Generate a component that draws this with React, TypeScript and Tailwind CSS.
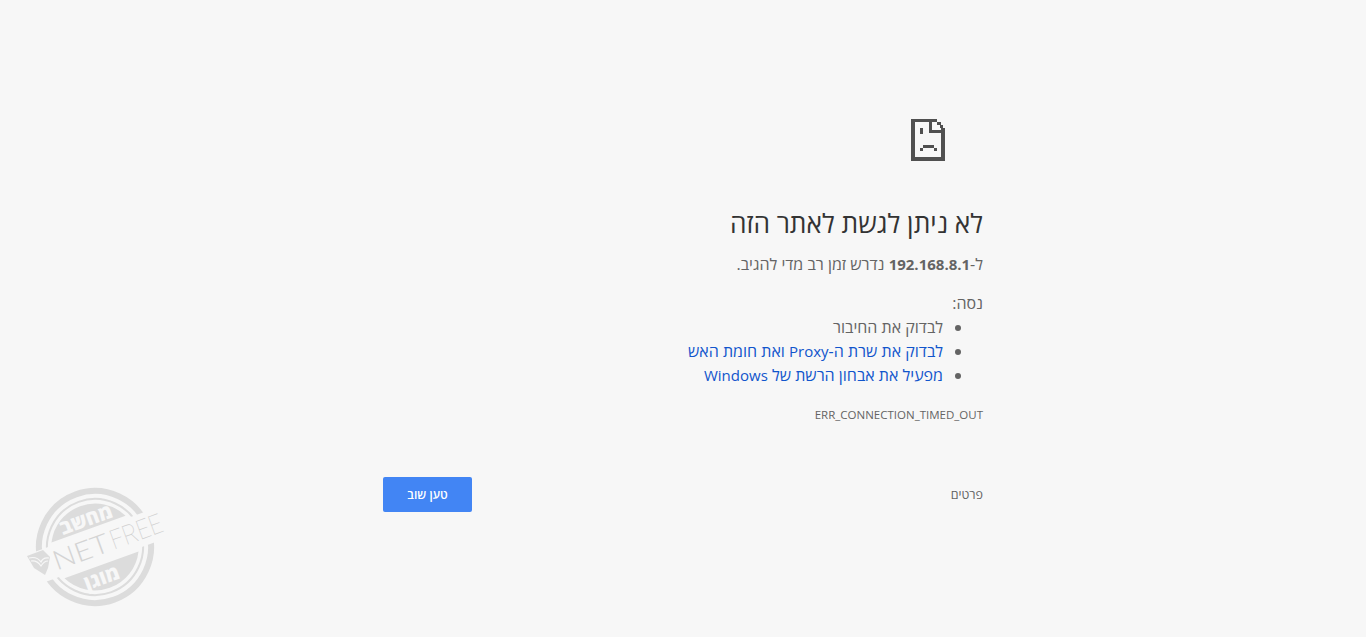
export default function App() {
  const latin = "text-[15px]";
  return (
    <div dir="rtl" className="relative min-h-[637px] bg-[#f7f7f7] overflow-hidden font-['Open_Sans','Liberation_Sans',sans-serif] text-[16px] leading-[24px] text-[#646464]">
      <div className="mx-auto w-[600px] pt-[119px]">
        <div dir="ltr" className="w-[72px]">
          <svg width="34" height="42" viewBox="0 0 34 42" shapeRendering="crispEdges" className="block" fill="#505050">
            <rect x="0" y="0" width="4" height="42" />
            <rect x="0" y="38" width="34" height="4" />
            <rect x="30" y="9" width="4" height="33" />
            <rect x="0" y="0" width="26" height="3" />
            <rect x="18" y="0" width="3" height="14" />
            <rect x="18" y="11" width="16" height="3" />
            <rect x="26" y="3" width="4" height="3" />
            <rect x="29" y="6" width="3" height="3" />
            <rect x="9" y="9" width="3" height="6" />
            <rect x="12" y="26" width="11" height="3" />
            <rect x="9" y="29" width="3" height="3" />
            <rect x="23" y="29" width="3" height="3" />
          </svg>
        </div>
        <h1 className="mt-[47px] text-[26.3px] leading-[30px] font-normal text-[#333333]">לא ניתן לגשת לאתר הזה</h1>
        <p className="mt-[14px]">ל-<b className={`font-bold ${latin}`}>192.168.8.1</b> נדרש זמן רב מדי להגיב.</p>
        <p className="mt-[15px]">נסה:</p>
        <ul className="list-disc pr-[40px]">
          <li>לבדוק את החיבור</li>
          <li><a className="text-[#1155cc]">לבדוק את שרת ה-<span className={latin}>Proxy</span> ואת חומת האש</a></li>
          <li><a className="text-[#1155cc]">מפעיל את אבחון הרשת של <span className={latin}>Windows</span></a></li>
        </ul>
        <div className="mt-[19px] text-[11.5px] leading-[18px]">ERR_CONNECTION_TIMED_OUT</div>
        <div className="mt-[53px] flex items-center justify-between">
          <span className="text-[12.5px] text-[#646464]">פרטים</span>
          <button className="h-[35px] w-[89px] rounded-[2px] bg-[#4285f4] text-[12px] font-semibold text-white">טען שוב</button>
        </div>
      </div>
      <svg width="170" height="130" viewBox="0 0 170 130" className="absolute left-[20px] top-[482px]">
        <g transform="rotate(-20 75 65)">
          <circle cx="75" cy="65" r="56" fill="none" stroke="#dcdcdc" strokeWidth="6" />
          <circle cx="75" cy="65" r="48" fill="none" stroke="#dcdcdc" strokeWidth="2" />
          <path d="M35.6 46 A44 44 0 0 1 114.4 46 Z" fill="#dcdcdc" />
          <path d="M35.6 84 A44 44 0 0 0 114.4 84 Z" fill="#dcdcdc" />
          <rect x="-10" y="49" width="190" height="32" fill="#f7f7f7" />
          <text x="76" y="43" textAnchor="middle" fontFamily="Open Sans, sans-serif" fontWeight="800" fontSize="20" fill="#f7f7f7">מחשב</text>
          <text x="71" y="103" textAnchor="middle" fontFamily="Open Sans, sans-serif" fontWeight="800" fontSize="20" fill="#f7f7f7">מוגן</text>
          <text x="31" y="74" direction="ltr" textAnchor="start" fontFamily="Lato, sans-serif" fontSize="27" fontWeight="300" fill="#d4d4d4" textLength="58" lengthAdjust="spacingAndGlyphs">NET</text>
          <text x="92" y="74" direction="ltr" textAnchor="start" fontFamily="Roboto, Lato, sans-serif" fontSize="27" fontWeight="100" fill="#d0d0d0" textLength="54" lengthAdjust="spacingAndGlyphs">FREE</text>
        </g>
        <path d="M7 74 L23 68 L30 75 L28 86 L25 93 L14 86 Z" fill="#dcdcdc" />
        <path d="M9 76 Q17 74 21 80 Q23 75 29 76 M11 79 Q17 78 21 84 Q24 79 28 79" fill="none" stroke="#f7f7f7" strokeWidth="1.2" />
      </svg>
    </div>
  );
}
